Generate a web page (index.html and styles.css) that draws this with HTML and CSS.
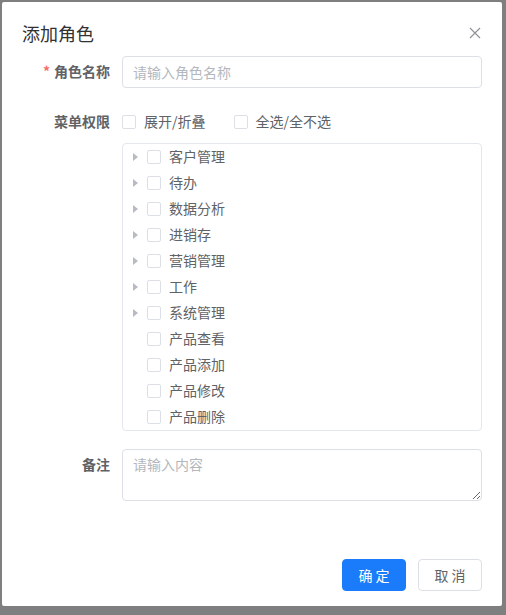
FILE: index.html
```html
<!DOCTYPE html>
<html lang="zh-CN">
<head>
<meta charset="utf-8">
<title>添加角色</title>
<link rel="stylesheet" href="styles.css">
</head>
<body>
<div class="dialog">
  <div class="header">
    <span class="title">添加角色</span>
    <span class="close" aria-label="关闭">
      <svg width="12" height="12" viewBox="0 0 12 12"><path d="M1 1L11 11M11 1L1 11" stroke="#909399" stroke-width="1.2" fill="none"/></svg>
    </span>
  </div>
  <div class="body">
    <div class="form-item">
      <label class="label"><span class="req">*</span>角色名称</label>
      <div class="content">
        <input class="input" type="text" placeholder="请输入角色名称">
      </div>
    </div>
    <div class="form-item">
      <label class="label">菜单权限</label>
      <div class="content">
        <div class="check-row">
          <span class="check"><span class="box"></span><span class="check-text">展开/折叠</span></span>
          <span class="check"><span class="box"></span><span class="check-text">全选/全不选</span></span>
        </div>
        <div class="tree">
          <div class="node"><span class="caret"><i></i></span><span class="box"></span><span class="node-label">客户管理</span></div>
          <div class="node"><span class="caret"><i></i></span><span class="box"></span><span class="node-label">待办</span></div>
          <div class="node"><span class="caret"><i></i></span><span class="box"></span><span class="node-label">数据分析</span></div>
          <div class="node"><span class="caret"><i></i></span><span class="box"></span><span class="node-label">进销存</span></div>
          <div class="node"><span class="caret"><i></i></span><span class="box"></span><span class="node-label">营销管理</span></div>
          <div class="node"><span class="caret"><i></i></span><span class="box"></span><span class="node-label">工作</span></div>
          <div class="node"><span class="caret"><i></i></span><span class="box"></span><span class="node-label">系统管理</span></div>
          <div class="node"><span class="caret leaf"></span><span class="box"></span><span class="node-label">产品查看</span></div>
          <div class="node"><span class="caret leaf"></span><span class="box"></span><span class="node-label">产品添加</span></div>
          <div class="node"><span class="caret leaf"></span><span class="box"></span><span class="node-label">产品修改</span></div>
          <div class="node"><span class="caret leaf"></span><span class="box"></span><span class="node-label">产品删除</span></div>
        </div>
      </div>
    </div>
    <div class="form-item">
      <label class="label">备注</label>
      <div class="content">
        <textarea class="textarea" placeholder="请输入内容"></textarea>
      </div>
    </div>
  </div>
  <div class="footer">
    <button class="btn primary">确 定</button>
    <button class="btn">取 消</button>
  </div>
</div>
</body>
</html>
```

FILE: styles.css
```css
html, body {
  margin: 0;
  padding: 0;
}
body {
  background: #7f7f7f;
  width: 506px;
  height: 615px;
  overflow: hidden;
  font-family: "Noto Sans CJK SC", "Noto Sans", "Liberation Sans", sans-serif;
  font-size: 14px;
  color: #606266;
}
.dialog {
  margin: 2px 0 0 2px;
  width: 500px;
  height: 604px;
  background: #fff;
  border-radius: 2px;
  display: flex;
  flex-direction: column;
  box-sizing: border-box;
}
.header {
  padding: 19px 20px 11px;
  display: flex;
  justify-content: space-between;
  align-items: center;
  height: 24px;
}
.title {
  font-size: 18px;
  line-height: 24px;
  color: #303133;
}
.close {
  display: flex;
  width: 12px;
  height: 12px;
  margin-right: 1px;
}
.body {
  padding: 0 20px;
}
.form-item {
  display: flex;
  margin-bottom: 18px;
}
.label {
  width: 100px;
  flex: none;
  box-sizing: border-box;
  padding-right: 12px;
  text-align: right;
  line-height: 31px;
  font-weight: bold;
  color: #606266;
}
.req {
  color: #f56c6c;
  margin-right: 4px;
}
.content {
  flex: 1;
  min-width: 0;
}
.input {
  display: block;
  width: 100%;
  height: 32px;
  box-sizing: border-box;
  border: 1px solid #dcdfe6;
  border-radius: 4px;
  padding: 0 10px 1px;
  font: inherit;
  color: #606266;
  outline: none;
}
.input::placeholder,
.textarea::placeholder {
  color: #b4b7bd;
}
.check-row {
  height: 32px;
  display: flex;
  align-items: center;
}
.check {
  display: inline-flex;
  align-items: center;
  margin-right: 28px;
}
.box {
  display: inline-block;
  width: 14px;
  height: 14px;
  box-sizing: border-box;
  border: 1px solid #dcdfe6;
  border-radius: 2px;
  background: #fff;
  flex: none;
}
.check-text {
  margin-left: 8px;
  color: #606266;
  line-height: 18px;
  padding-bottom: 2px;
}
.tree {
  margin-top: 5px;
  border: 1px solid #e4e7ed;
  border-radius: 4px;
}
.node {
  height: 26px;
  display: flex;
  align-items: center;
}
.caret {
  width: 24px;
  height: 26px;
  display: flex;
  align-items: center;
  justify-content: center;
  flex: none;
}
.caret i {
  display: block;
  width: 0;
  height: 0;
  border-top: 4px solid transparent;
  border-bottom: 4px solid transparent;
  border-left: 5px solid #b8bbc2;
  margin-left: 1px;
}
.node .box {
  margin-right: 8px;
}
.node-label {
  color: #606266;
  line-height: 18px;
  padding-bottom: 2px;
}
.textarea {
  display: block;
  width: 100%;
  height: 52px;
  box-sizing: border-box;
  border: 1px solid #dcdfe6;
  border-radius: 4px;
  padding: 4px 10px 5px;
  font: inherit;
  line-height: 1.5;
  color: #606266;
  outline: none;
  resize: vertical;
}
.footer {
  margin-top: auto;
  padding: 0 20px 15px;
  display: flex;
  justify-content: flex-end;
  gap: 12px;
}
.btn {
  width: 64px;
  height: 32px;
  box-sizing: border-box;
  border: 1px solid #dcdfe6;
  border-radius: 4px;
  background: #fff;
  color: #606266;
  font-family: inherit;
  font-size: 14px;
  padding: 0 0 1px;
  cursor: pointer;
}
.btn.primary {
  background: #1a7cfa;
  border-color: #1a7cfa;
  color: #fff;
}
```
